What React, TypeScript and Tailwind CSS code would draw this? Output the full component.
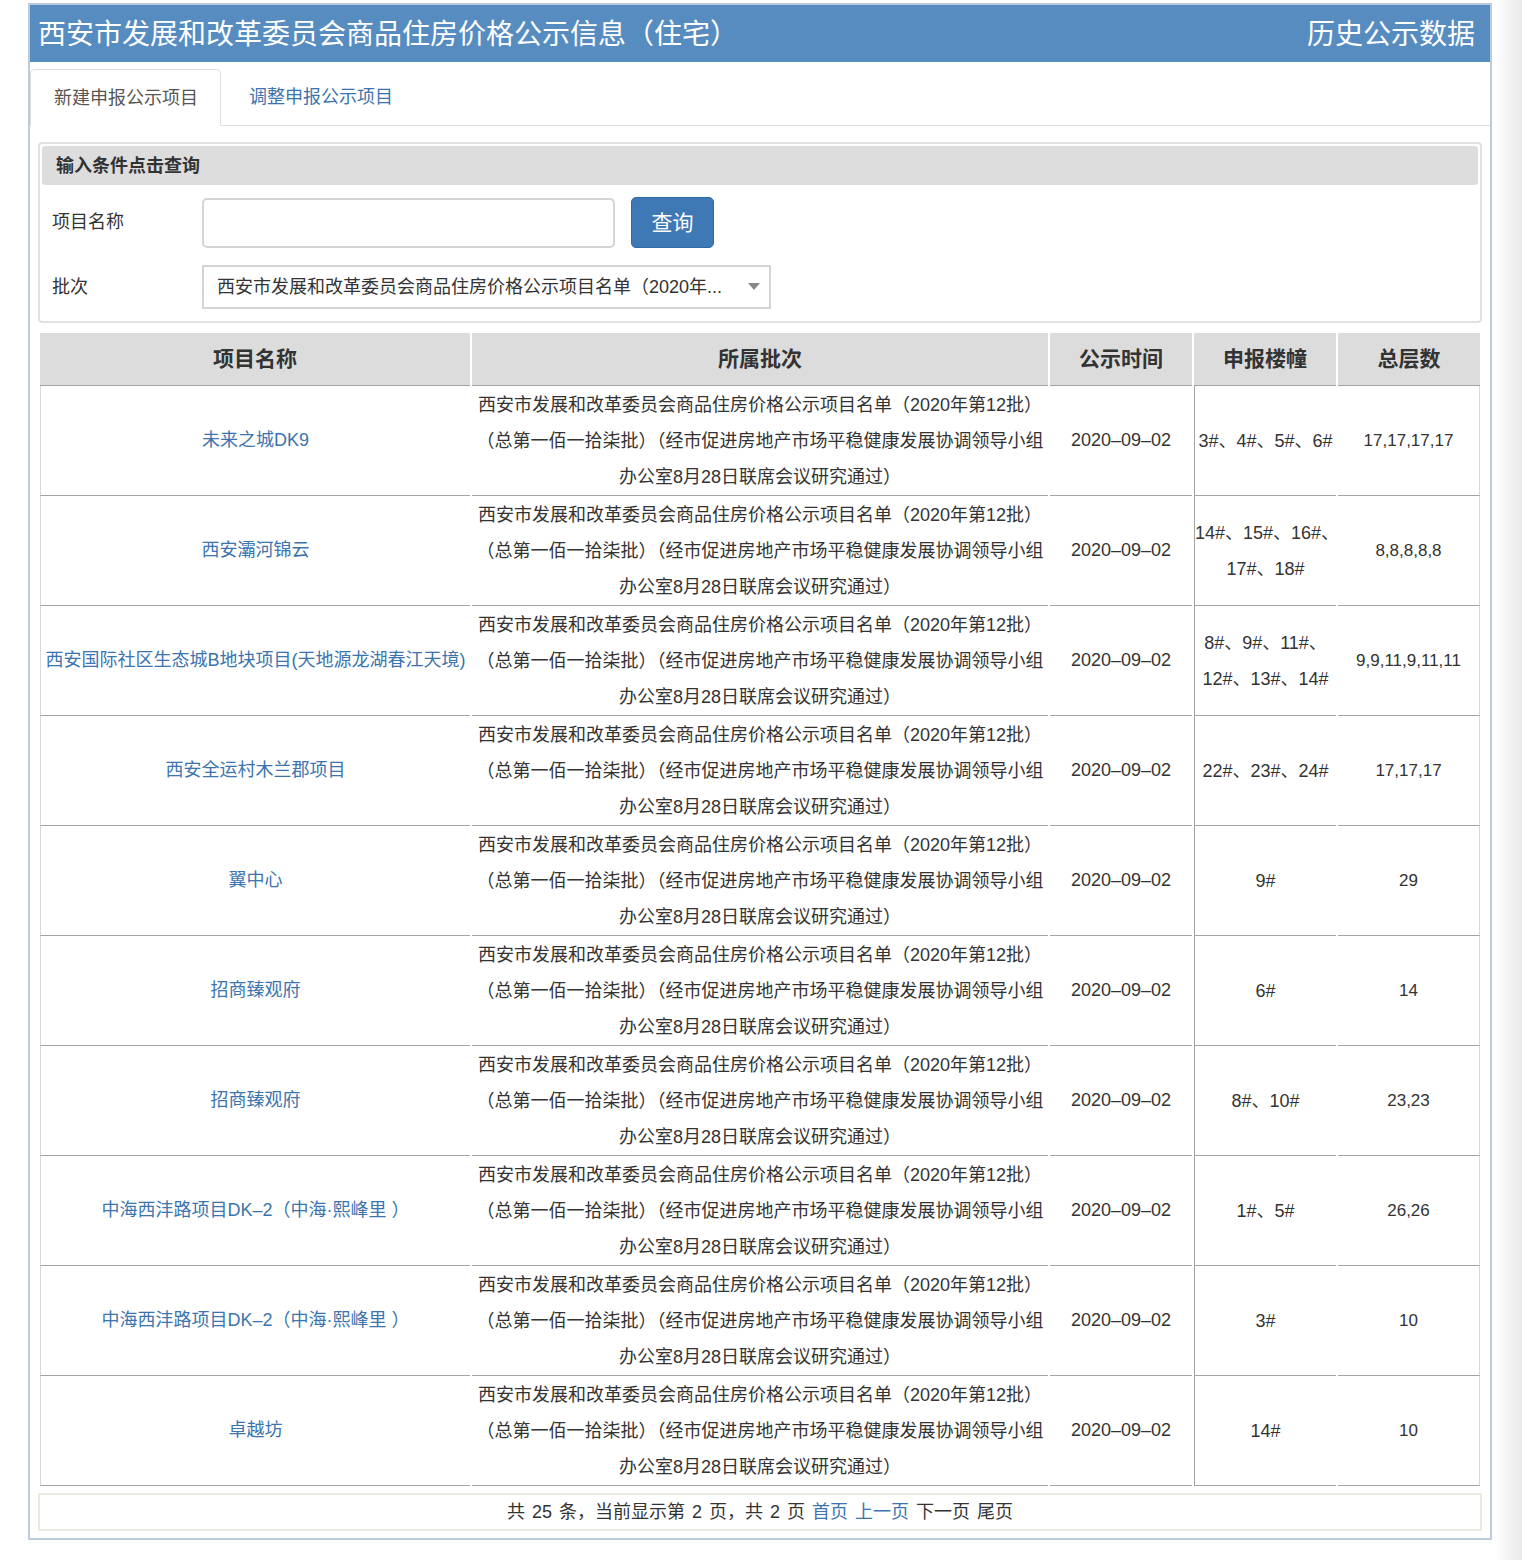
import React from "react";

const BATCH_L1 = "西安市发展和改革委员会商品住房价格公示项目名单（2020年第12批）";
const BATCH_L2 = "（总第一佰一拾柒批）（经市促进房地产市场平稳健康发展协调领导小组";
const BATCH_L3 = "办公室8月28日联席会议研究通过）";

type Row = { name: string; bld: string[]; floors: string };

const rows: Row[] = [
  { name: "未来之城DK9", bld: ["3#、4#、5#、6#"], floors: "17,17,17,17" },
  { name: "西安灞河锦云", bld: ["14#、15#、16#、", "17#、18#"], floors: "8,8,8,8,8" },
  { name: "西安国际社区生态城B地块项目(天地源龙湖春江天境)", bld: ["8#、9#、11#、", "12#、13#、14#"], floors: "9,9,11,9,11,11" },
  { name: "西安全运村木兰郡项目", bld: ["22#、23#、24#"], floors: "17,17,17" },
  { name: "翼中心", bld: ["9#"], floors: "29" },
  { name: "招商臻观府", bld: ["6#"], floors: "14" },
  { name: "招商臻观府", bld: ["8#、10#"], floors: "23,23" },
  { name: "中海西沣路项目DK–2（中海·熙峰里 ）", bld: ["1#、5#"], floors: "26,26" },
  { name: "中海西沣路项目DK–2（中海·熙峰里 ）", bld: ["3#"], floors: "10" },
  { name: "卓越坊", bld: ["14#"], floors: "10" },
];

export default function App() {
  return (
    <div className="w-[1522px] h-[1560px] bg-white flex font-['Liberation_Sans','Noto_Sans_CJK_SC',sans-serif] text-[#333]">
      <div className="ml-[28px] mt-[3px] w-[1464px] h-[1537px] border-2 border-[#bccbd9] flex flex-col shrink-0">
        {/* Header */}
        <div className="shrink-0 h-[57px] bg-[#578cc1] flex items-center justify-between pl-[8px] pr-[15px] pt-[3px] text-white">
          <div className="text-[28px] leading-none">西安市发展和改革委员会商品住房价格公示信息（住宅）</div>
          <div className="text-[28px] leading-none">历史公示数据</div>
        </div>

        {/* Tabs */}
        <div className="shrink-0 h-[64px] flex items-end border-b border-[#dddddd]">
          <div className="w-[191px] h-[57px] -mb-px border border-[#dddddd] border-b-white bg-white rounded-t-[5px] flex items-center pl-[23px] pt-[2px] text-[18px] text-[#555]">
            新建申报公示项目
          </div>
          <div className="h-[57px] flex items-center pl-[28px] pt-[2px] text-[18px] text-[#3b74ae]">调整申报公示项目</div>
        </div>

        {/* Query panel */}
        <div className="shrink-0 mx-[8px] mt-[16px] h-[181px] border-2 border-[#e1e1e1] rounded-[4px] p-[2px]">
          <div className="h-[39px] bg-[#dddddd] rounded-[3px] pl-[14px] pt-[2px] flex items-center text-[18px] font-bold text-[#333]">
            输入条件点击查询
          </div>
          <div className="mt-[12px] flex items-center">
            <div className="w-[160px] pl-[10px] text-[18px]">项目名称</div>
            <div className="w-[413px] h-[50px] border-2 border-[#d4d4d4] rounded-[5px] bg-white" />
            <div className="ml-[16px] w-[83px] h-[51px] bg-[#3e79b5] border border-[#2f6aa6] rounded-[5px] flex items-center justify-center text-white text-[21px]">
              查询
            </div>
          </div>
          <div className="mt-[17px] flex items-center">
            <div className="w-[160px] pl-[10px] text-[18px]">批次</div>
            <div className="w-[569px] h-[44px] border-2 border-[#d4d4d4] bg-white flex items-center pl-[13px] pr-[10px] relative">
              <span className="text-[18px] whitespace-nowrap overflow-hidden">西安市发展和改革委员会商品住房价格公示项目名单（2020年...</span>
              <svg className="absolute right-[9px] top-[16px]" width="12" height="8" viewBox="0 0 12 8">
                <polygon points="0,0 12,0 6,7" fill="#888" />
              </svg>
            </div>
          </div>
        </div>

        {/* Table */}
        <div className="shrink-0 mx-[8px] mt-[10px]">
          <table className="w-[1444px] table-fixed border-separate border-spacing-x-[2px] border-spacing-y-0">
            <colgroup>
              <col className="w-[430px]" />
              <col className="w-[576px]" />
              <col className="w-[142px]" />
              <col className="w-[142px]" />
              <col className="w-[142px]" />
            </colgroup>
            <thead>
              <tr>
                {["项目名称", "所属批次", "公示时间", "申报楼幢", "总层数"].map((h) => (
                  <th key={h} className="h-[53px] bg-[#dcdcdc] border-b border-[#a3a3a3] text-[21px] font-bold text-[#333] text-center p-0">
                    {h}
                  </th>
                ))}
              </tr>
            </thead>
            <tbody>
              {rows.map((r, i) => (
                <tr key={i}>
                  <td className="h-[110px] border-b border-l border-[#a3a3a3] border-l-[#d8d8d8] text-center text-[18px] text-[#3b74ae] p-0 whitespace-nowrap">
                    {r.name}
                  </td>
                  <td className="h-[110px] border-b border-[#a3a3a3] text-center text-[18px] leading-[36px] p-0 whitespace-nowrap">
                    {BATCH_L1}
                    <br />
                    {BATCH_L2}
                    <br />
                    {BATCH_L3}
                  </td>
                  <td className="h-[110px] border-b border-[#a3a3a3] text-center text-[18px] p-0 whitespace-nowrap">2020–09–02</td>
                  <td className="h-[110px] border-b border-l border-[#a3a3a3] text-center text-[18px] leading-[36px] p-0 whitespace-nowrap">
                    {r.bld.map((b, j) => (
                      <React.Fragment key={j}>
                        {j > 0 && <br />}
                        {b}
                      </React.Fragment>
                    ))}
                  </td>
                  <td className="h-[110px] border-b border-r border-[#a3a3a3] border-r-[#d8d8d8] text-center text-[17px] p-0 whitespace-nowrap">
                    {r.floors}
                  </td>
                </tr>
              ))}
            </tbody>
          </table>
        </div>

        {/* Pagination */}
        <div className="shrink-0 mx-[8px] mt-[7px] h-[38px] border-2 border-[#e7eee1] flex items-center justify-center text-[18px] text-[#333] whitespace-pre [word-spacing:2px]">
          <span>共 25 条，当前显示第 2 页，共 2 页 </span>
          <span className="text-[#3b74ae]">首页</span>
          <span> </span>
          <span className="text-[#3b74ae]">上一页</span>
          <span> 下一页 尾页</span>
        </div>
      </div>
      <div className="flex-1 ml-[3px] bg-gradient-to-r from-white to-[#e9e9e9]" />
    </div>
  );
}
